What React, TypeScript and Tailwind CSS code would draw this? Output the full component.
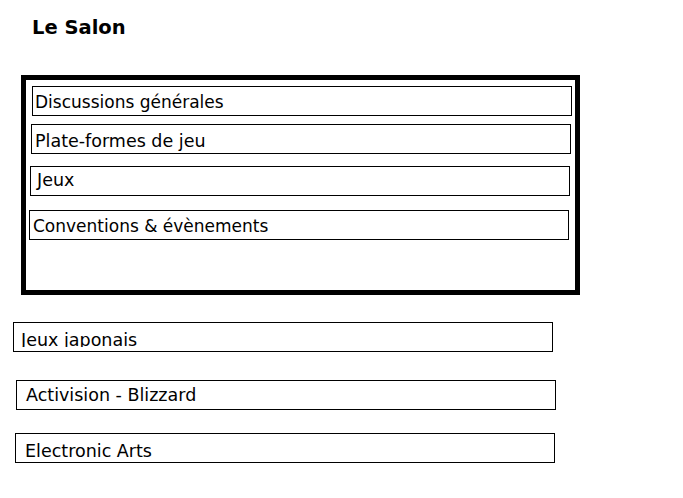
import React from "react";

type Item = { label: string; box: string; text: string };

// rubriques du salon (dans le cadre)
const salon: Item[] = [
  { label: "Discussions générales", box: "ml-[6px] mt-[6px]", text: "text-[17px] pl-[2px] pt-[5px]" },
  { label: "Plate-formes de jeu", box: "ml-[5px] mt-[8px]", text: "text-[17.5px] pl-[3px] pt-[6px]" },
  { label: "Jeux", box: "ml-[4px] mt-[12px]", text: "text-[17.5px] pl-[6px] pt-[3px]" },
  { label: "Conventions & évènements", box: "ml-[3px] mt-[14px]", text: "text-[17px] pl-[3px] pt-[5px]" },
];

// rubriques hors du cadre
const editeurs: Item[] = [
  { label: "Activision - Blizzard", box: "ml-[16px] mt-[28px]", text: "text-[17.5px] pl-[9px] pt-[4px]" },
  { label: "Electronic Arts", box: "ml-[15px] mt-[23px]", text: "text-[17.5px] pl-[9px] pt-[7px]" },
];

function Row({ item }: { item: Item }) {
  return (
    <div className={`h-[30px] w-[540px] border border-black ${item.box}`}>
      <div className={`whitespace-nowrap leading-[20px] text-black ${item.text}`}>{item.label}</div>
    </div>
  );
}

export default function App() {
  return (
    <div className="min-h-screen w-full bg-white pb-8 font-['DejaVu_Sans',sans-serif] text-black">
      <h3 className="ml-[32px] pt-[17px] text-[19.5px] font-bold leading-[22px]">Le Salon</h3>

      {/* cadre principal */}
      <div className="ml-[21px] mt-[36px] h-[220px] w-[559px] border-[5px] border-black">
        {salon.map((item) => (
          <Row key={item.label} item={item} />
        ))}
      </div>

      {/* texte coupé en bas, comme sur la page d'origine */}
      <div className="ml-[13px] mt-[27px] h-[30px] w-[540px] border border-black">
        <div className="h-[24px] overflow-hidden whitespace-nowrap pl-[7px] pt-[7px] text-[17.5px] leading-[20px]">
          Jeux japonais
        </div>
      </div>

      {editeurs.map((item) => (
        <Row key={item.label} item={item} />
      ))}
    </div>
  );
}
